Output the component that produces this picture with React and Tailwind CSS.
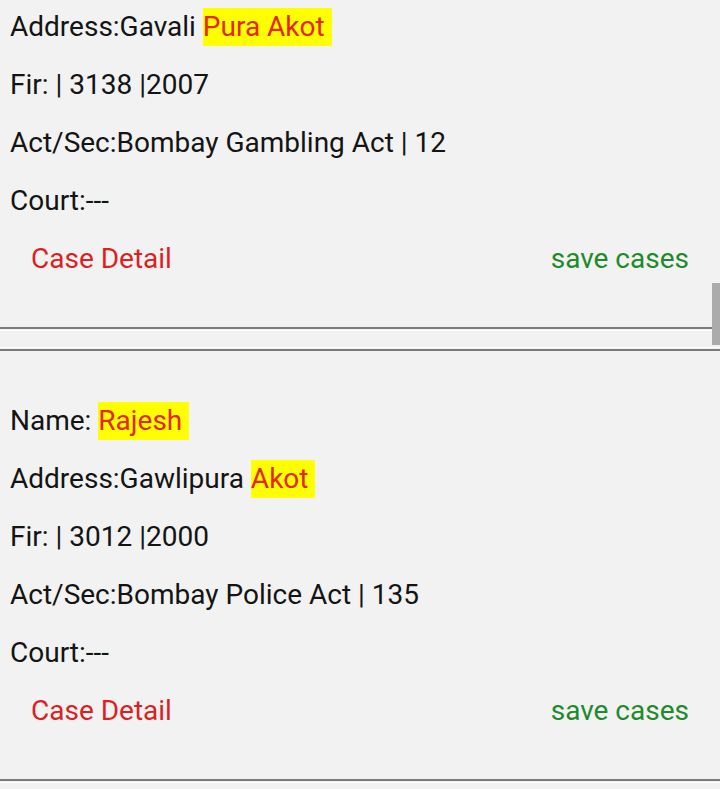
import React from 'react';

const cases = [
    {
        name: 'Sandip',
        address: ['Gavali ', 'Pura Akot'],
        fir: 'Fir: | 3138 |2007',
        act: 'Act/Sec:Bombay Gambling Act | 12',
        court: 'Court:---',
    },
    {
        name: 'Rajesh',
        address: ['Gawlipura ', 'Akot'],
        fir: 'Fir: | 3012 |2000',
        act: 'Act/Sec:Bombay Police Act | 135',
        court: 'Court:---',
    },
    {
        name: 'Ramesh',
        address: ['Gawlipura ', 'Akot'],
        fir: 'Fir: | 2291 |2003',
        act: 'Act/Sec:Bombay Police Act | 135',
        court: 'Court:---',
    },
];

const Mark = ({ children }) => (
    <span className="inline-block bg-[#ffff00] text-[#e6261a] leading-[38px] whitespace-pre">{children} </span>
);

const CaseCard = ({ item }) => (
    <div className="border-y border-white py-px">
        <div className="border-y-2 border-[#7b7b7b] pt-[41px] pb-[39px]">
            <div className="h-[58px] flex items-center pl-[10px]">
                <span className="whitespace-pre">Name: </span>
                <Mark>{item.name}</Mark>
            </div>
            <div className="h-[58px] flex items-center pl-[10px]">
                <span className="whitespace-pre">Address:{item.address[0]}</span>
                <Mark>{item.address[1]}</Mark>
            </div>
            <div className="h-[58px] flex items-center pl-[10px]">{item.fir}</div>
            <div className="h-[58px] flex items-center pl-[10px]">{item.act}</div>
            <div className="h-[58px] flex items-center pl-[10px]">{item.court}</div>
            <div className="h-[58px] flex items-center justify-between pl-[31px] pr-[31px]">
                <button className="text-[#dc1f1f]">Case Detail</button>
                <button className="text-[#1f8a2a]">save cases</button>
            </div>
        </div>
    </div>
);

export default function App() {
    return (
        <div
            className="relative w-[720px] h-[789px] overflow-hidden bg-[#f2f2f2] text-[#141414] text-[28px]"
            style={{ fontFamily: 'Roboto, "Noto Sans", sans-serif' }}
        >
            {/* list scrolled part-way through the first card */}
            <div className="-mt-[105px] flex flex-col gap-[16px]">
                {cases.map((item, i) => (
                    <CaseCard key={i} item={item} />
                ))}
            </div>

            {/* scrollbar */}
            <div className="absolute right-0 top-[283px] w-[8px] h-[62px] bg-[#ababab]"></div>
        </div>
    );
}
